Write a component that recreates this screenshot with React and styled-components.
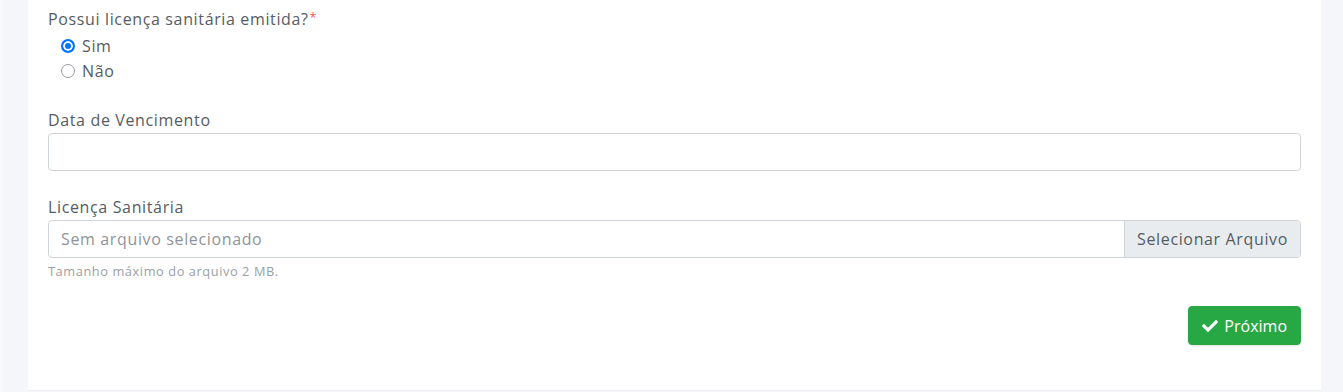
import React, { useState } from 'react';
import styled, { createGlobalStyle } from 'styled-components';
import { FaCheck } from 'react-icons/fa';

const GlobalStyle = createGlobalStyle`
  html, body {
    margin: 0;
    padding: 0;
    background: #f4f6f9;
    font-family: "Open Sans", "Noto Sans", sans-serif;
    letter-spacing: 0.04em;
  }
  * { box-sizing: border-box; }
`;

const Page = styled.div`
  height: 392px;
  display: flex;
  padding-left: 28px;
  padding-right: 22px;
  border-left: 3px solid #f9fafb;
  background: #f4f6f9;
`;

const Card = styled.div`
  flex: 1;
  height: 391px;
  background: #fff;
  padding: 7px 20px 0 20px;
  margin-left: -3px;
  border-bottom: 1px solid #eceef1;
`;

const Group = styled.div`
  margin-bottom: ${(p) => p.$mb || 0}px;
`;

const Label = styled.label`
  display: block;
  font-size: 16px;
  line-height: 24px;
  color: #555c63;
  margin-bottom: ${(p) => p.$mb || 0}px;
`;

const Star = styled.span`
  position: relative;
  top: -3px;
  line-height: 0;
  color: #ef5350;
  font-size: 12px;
  margin-left: 1px;
`;

const RadioRow = styled.div`
  display: flex;
  align-items: center;
  height: 25px;
  padding-left: 13px;
  font-size: 16px;
  color: #555c63;
  cursor: pointer;
`;

const RadioDot = styled.span`
  width: 14px;
  height: 14px;
  border-radius: 50%;
  margin-right: 7px;
  flex-shrink: 0;
  background: ${(p) => (p.$checked ? '#0075ff' : '#fff')};
  border: ${(p) => (p.$checked ? '2px solid #0075ff' : '1px solid #9a9aa4')};
  box-shadow: ${(p) => (p.$checked ? 'inset 0 0 0 2px #fff' : 'none')};
`;

const Input = styled.input`
  display: block;
  width: 100%;
  height: 38px;
  border: 1px solid #ced4da;
  border-radius: 4px;
  padding: 6px 12px;
  font: inherit;
  font-size: 16px;
  color: #495057;
  outline: none;
`;

const FileBox = styled.div`
  display: flex;
  height: 38px;
  border: 1px solid #ced4da;
  border-radius: 4px;
  overflow: hidden;
`;

const FileName = styled.div`
  flex: 1;
  display: flex;
  align-items: center;
  padding: 0 12px;
  font-size: 16px;
  color: #8e949a;
`;

const FileButton = styled.div`
  display: flex;
  align-items: center;
  padding: 0 12px;
  background: #e9ecef;
  border-left: 1px solid #ced4da;
  font-size: 16px;
  color: #555c63;
`;

const Help = styled.small`
  display: block;
  margin-top: 4px;
  font-size: 12.8px;
  line-height: 19px;
  letter-spacing: 0.045em;
  color: #9aa0a6;
`;

const Actions = styled.div`
  display: flex;
  justify-content: flex-end;
  margin-top: 25px;
`;

const NextButton = styled.button`
  display: flex;
  align-items: center;
  gap: 6px;
  height: 39px;
  padding: 0 13px;
  border: 1px solid #28a745;
  border-radius: 4px;
  background: #28a745;
  color: #fff;
  font: inherit;
  font-size: 16px;
  box-shadow: 0 1px 2px rgba(0, 0, 0, 0.12);
  cursor: pointer;
`;

export default function App() {
  const [hasLicense, setHasLicense] = useState('sim');

  return (
    <>
      <GlobalStyle />
      <Page>
        <Card>
          <Group $mb={25}>
            <Label $mb={2}>
              Possui licença sanitária emitida?<Star>*</Star>
            </Label>
            <RadioRow onClick={() => setHasLicense('sim')}>
              <RadioDot $checked={hasLicense === 'sim'} />
              Sim
            </RadioRow>
            <RadioRow onClick={() => setHasLicense('nao')}>
              <RadioDot $checked={hasLicense === 'nao'} />
              Não
            </RadioRow>
          </Group>

          <Group $mb={24}>
            <Label $mb={1}>Data de Vencimento</Label>
            <Input type="text" />
          </Group>

          <Group>
            <Label $mb={1}>Licença Sanitária</Label>
            <FileBox>
              <FileName>Sem arquivo selecionado</FileName>
              <FileButton>Selecionar Arquivo</FileButton>
            </FileBox>
            <Help>Tamanho máximo do arquivo 2 MB.</Help>
          </Group>

          <Actions>
            <NextButton>
              <FaCheck size={16} />
              Próximo
            </NextButton>
          </Actions>
        </Card>
      </Page>
    </>
  );
}
